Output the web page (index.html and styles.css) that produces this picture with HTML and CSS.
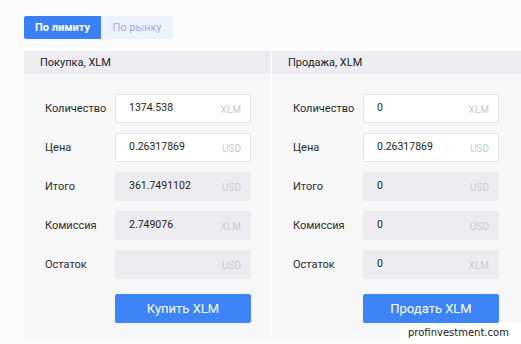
FILE: index.html
```html
<!DOCTYPE html>
<html lang="ru">
  <head>
    <meta charset="UTF-8" />
    <meta name="viewport" content="width=device-width, initial-scale=1.0" />
    <title>Лимитный ордер XLM</title>
    <link rel="stylesheet" href="styles.css">
  </head>
  <body>
    <div class="page">
      <div class="tabs">
        <div class="tab active">По лимиту</div>
        <div class="tab">По рынку</div>
      </div>

      <div class="panels">
        <!-- Buy -->
        <div class="panel">
          <div class="panel-head">Покупка, XLM</div>
          <div class="panel-body">
            <div class="row">
              <span class="label">Количество</span>
              <div class="field"><span class="value">1374.538</span><span class="unit">XLM</span></div>
            </div>
            <div class="row">
              <span class="label">Цена</span>
              <div class="field"><span class="value">0.26317869</span><span class="unit">USD</span></div>
            </div>
            <div class="row">
              <span class="label">Итого</span>
              <div class="field readonly"><span class="value">361.7491102</span><span class="unit">USD</span></div>
            </div>
            <div class="row">
              <span class="label">Комиссия</span>
              <div class="field readonly"><span class="value">2.749076</span><span class="unit">XLM</span></div>
            </div>
            <div class="row">
              <span class="label">Остаток</span>
              <div class="field readonly"><span class="value"></span><span class="unit">USD</span></div>
            </div>
            <div class="row action">
              <button class="btn">Купить XLM</button>
            </div>
          </div>
        </div>

        <!-- Sell -->
        <div class="panel">
          <div class="panel-head">Продажа, XLM</div>
          <div class="panel-body">
            <div class="row">
              <span class="label">Количество</span>
              <div class="field"><span class="value">0</span><span class="unit">XLM</span></div>
            </div>
            <div class="row">
              <span class="label">Цена</span>
              <div class="field"><span class="value">0.26317869</span><span class="unit">USD</span></div>
            </div>
            <div class="row">
              <span class="label">Итого</span>
              <div class="field readonly"><span class="value">0</span><span class="unit">USD</span></div>
            </div>
            <div class="row">
              <span class="label">Комиссия</span>
              <div class="field readonly"><span class="value">0</span><span class="unit">USD</span></div>
            </div>
            <div class="row">
              <span class="label">Остаток</span>
              <div class="field readonly"><span class="value">0</span><span class="unit">XLM</span></div>
            </div>
            <div class="row action">
              <button class="btn">Продать XLM</button>
            </div>
          </div>
        </div>
      </div>
    </div>

    <div class="watermark">profinvestment.com</div>
  </body>
</html>
```

FILE: styles.css
```css
body {
  margin: 0;
  font-family: Roboto, "Noto Sans", Arial, sans-serif;
  background-color: #fbfbfb;
  color: #2b2b33;
  width: 521px;
  height: 344px;
  overflow: hidden;
  position: relative;
}
.page {
  padding: 16px 0 0 24px;
}
.tabs {
  display: flex;
  height: 23px;
}
.tab {
  width: 72px;
  display: flex;
  align-items: center;
  justify-content: center;
  font-size: 11px;
  background-color: #edf2fc;
  color: #9cb3e3;
  border-radius: 0 2px 2px 0;
}
.tab.active {
  width: 77px;
  background-color: #3a80f6;
  color: white;
  font-weight: bold;
  border-radius: 2px 0 0 2px;
}
.panels {
  margin-top: 12px;
  display: grid;
  grid-template-columns: 247px 249px;
  gap: 1px;
  background-color: #ffffff;
  width: 497px;
}
.panel {
  background-color: #f7f7f8;
}
.panel-head {
  height: 23px;
  line-height: 23px;
  padding-left: 16px;
  background-color: #ededf1;
  font-size: 11px;
  color: #22222a;
}
.panel-body {
  padding: 20px 0 16px 21px;
  display: flex;
  flex-direction: column;
  gap: 10px;
}
.row {
  display: flex;
  align-items: center;
  height: 29px;
}
.row.action {
  margin-top: 5px;
}
.label {
  width: 70px;
  font-size: 11px;
  color: #2b2b33;
}
.field {
  width: 136px;
  height: 29px;
  box-sizing: border-box;
  background-color: white;
  border: 1px solid #e3e5ea;
  border-radius: 2px;
  display: flex;
  align-items: center;
  justify-content: space-between;
  padding: 0 9px 0 13px;
}
.field.readonly {
  background-color: #ececf0;
  border-color: #ececf0;
}
.value {
  font-size: 10.5px;
  color: #1d1d22;
  margin-top: -2px;
}
.unit {
  font-size: 10px;
  color: #c9cdd5;
  margin-top: 2px;
}
.btn {
  margin-left: 70px;
  width: 136px;
  height: 29px;
  border: none;
  border-radius: 2px;
  background-color: #3c84f8;
  color: white;
  font-family: inherit;
  font-size: 13px;
}

/* watermark over the corner */
.watermark {
  position: absolute;
  right: 0;
  bottom: 0;
  width: 121px;
  height: 21px;
  line-height: 19px;
  padding-left: 8px;
  box-sizing: border-box;
  background-color: white;
  font-family: "DejaVu Sans", Verdana, sans-serif;
  font-size: 10px;
  color: #1a1a1a;
}
```
